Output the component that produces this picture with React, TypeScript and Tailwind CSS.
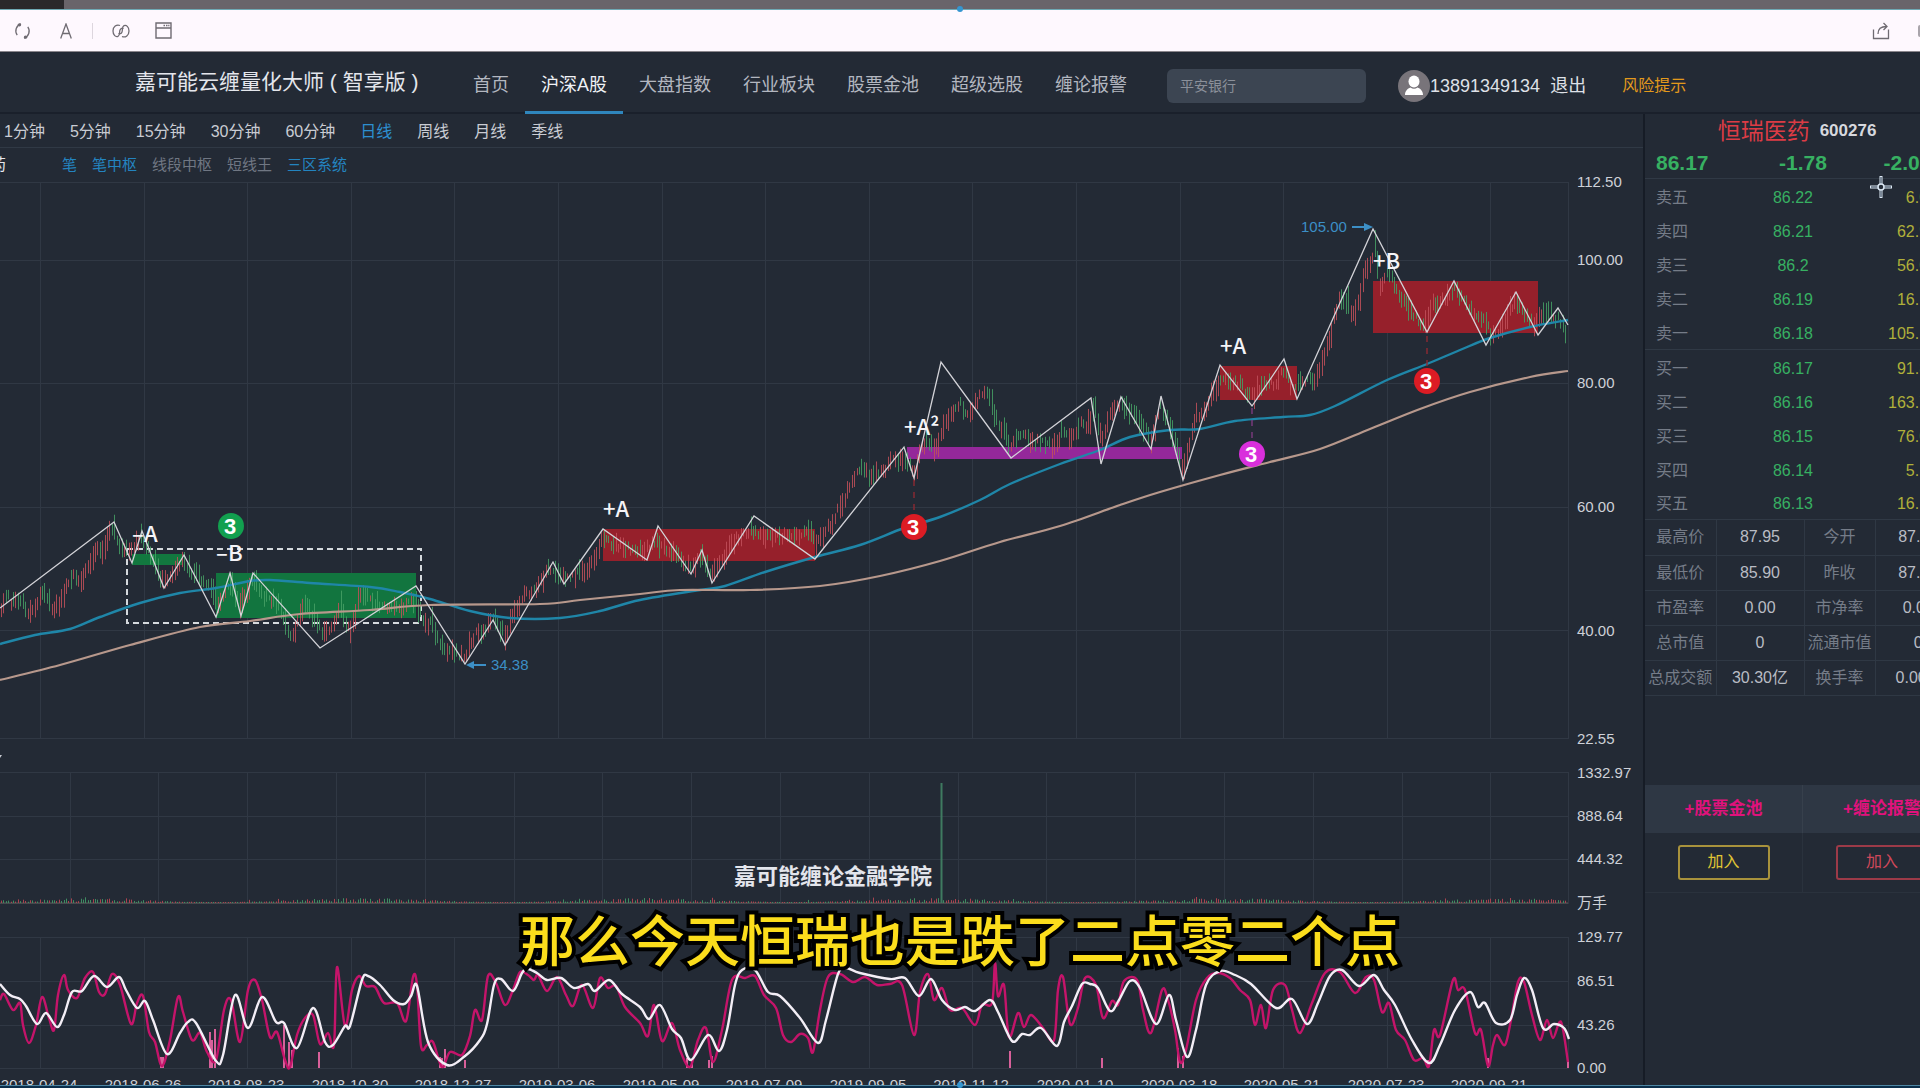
import React, { useState } from 'react';

type Point = [number, number];

const navItems = ['首页', '沪深A股', '大盘指数', '行业板块', '股票金池', '超级选股', '缠论报警'];
const periods = ['1分钟', '5分钟', '15分钟', '30分钟', '60分钟', '日线', '周线', '月线', '季线'];
const overlays = [
  { name: '笔', on: true },
  { name: '笔中枢', on: true },
  { name: '线段中枢', on: false },
  { name: '短线王', on: false },
  { name: '三区系统', on: true },
];

const asks = [
  ['卖五', '86.22', '6.00'],
  ['卖四', '86.21', '62.90'],
  ['卖三', '86.2', '56.00'],
  ['卖二', '86.19', '16.10'],
  ['卖一', '86.18', '105.10'],
];
const bids = [
  ['买一', '86.17', '91.80'],
  ['买二', '86.16', '163.70'],
  ['买三', '86.15', '76.00'],
  ['买四', '86.14', '5.10'],
  ['买五', '86.13', '16.10'],
];
const details = [
  ['最高价', '87.95', '今开', '87.50'],
  ['最低价', '85.90', '昨收', '87.95'],
  ['市盈率', '0.00', '市净率', '0.00'],
  ['总市值', '0', '流通市值', '0'],
  ['总成交额', '30.30亿', '换手率', '0.00%'],
];

const dates = [
  '2018-04-24', '2018-06-26', '2018-08-23', '2018-10-30', '2018-12-27', '2019-03-06', '2019-05-09', '2019-07-09',
  '2019-09-05', '2019-11-12', '2020-01-10', '2020-03-18', '2020-05-21', '2020-07-23', '2020-09-21',
];
const gridX = dates.map((_, i) => Math.round(40 + i * 103.6));
const volumeGridX = Array.from({ length: 17 }, (_, i) => Math.round(69.5 + i * 88.8));

const trend: Point[] = [
  [0, 612], [5, 595], [12, 602], [20, 597], [28, 612], [36, 603], [44, 592], [52, 610], [62, 600], [70, 575],
  [80, 582], [88, 568], [98, 548], [104, 555], [108, 535], [114, 530], [120, 545], [131, 552], [141, 535], [150, 555],
  [155, 565], [163, 585], [172, 575], [183, 560], [192, 572], [205, 582], [213, 590], [218, 604], [230, 580], [240, 608],
  [252, 578], [262, 595], [275, 600], [283, 615], [292, 640], [300, 615], [306, 605], [315, 620], [325, 635], [335, 625],
  [340, 605], [350, 635], [358, 600], [362, 592], [370, 600], [385, 608], [400, 607], [415, 600], [421, 615], [426, 625],
  [432, 620], [438, 640], [444, 650], [452, 652], [462, 656], [468, 650], [475, 635], [485, 628], [493, 620], [505, 635],
  [515, 610], [525, 595], [540, 585], [547, 570], [555, 568], [562, 578], [575, 575], [590, 568], [600, 545], [605, 538],
  [615, 545], [630, 550], [645, 552], [655, 540], [662, 550], [675, 550], [685, 568], [695, 565], [702, 555], [712, 575],
  [722, 560], [735, 540], [750, 528], [760, 535], [790, 536], [810, 532], [815, 545], [825, 535], [835, 515], [845, 500],
  [850, 482], [860, 470], [870, 475], [885, 468], [895, 458], [905, 460], [914, 472], [925, 440], [935, 450], [942, 430],
  [950, 412], [960, 405], [970, 415], [978, 398], [988, 392], [992, 405], [998, 425], [1005, 430], [1010, 448], [1018, 435],
  [1030, 440], [1045, 445], [1055, 445], [1062, 430], [1070, 440], [1080, 425], [1088, 425], [1095, 405], [1101, 440], [1110, 415],
  [1122, 405], [1135, 415], [1145, 430], [1152, 440], [1160, 405], [1172, 430], [1183, 470], [1190, 440], [1196, 415], [1205, 410],
  [1215, 390], [1221, 375], [1230, 380], [1240, 385], [1253, 398], [1262, 382], [1275, 385], [1284, 369], [1290, 388], [1300, 385],
  [1315, 378], [1322, 360], [1330, 340], [1338, 298], [1348, 303], [1352, 318], [1358, 305], [1364, 275], [1371, 262], [1374, 240],
  [1380, 285], [1388, 268], [1395, 285], [1402, 300], [1412, 315], [1420, 322], [1427, 325], [1433, 302], [1440, 305], [1450, 292],
  [1455, 290], [1465, 300], [1475, 315], [1485, 320], [1490, 335], [1500, 330], [1512, 305], [1518, 302], [1525, 315], [1535, 325],
  [1543, 310], [1555, 318], [1562, 322], [1568, 343],
];

const penLine: Point[] = [
  [0, 608], [114, 522], [132, 563], [142, 531], [164, 588], [184, 555], [216, 617], [230, 573], [241, 616], [253, 573],
  [320, 648], [416, 586], [465, 664], [493, 620], [505, 645], [553, 562], [564, 584], [603, 529], [647, 560], [658, 526],
  [691, 574], [702, 550], [712, 583], [754, 516], [815, 559], [904, 447], [914, 478], [941, 362], [1011, 458], [1091, 398],
  [1101, 464], [1121, 397], [1151, 449], [1161, 396], [1183, 480], [1220, 365], [1252, 406], [1284, 359], [1297, 399],
  [1373, 229], [1427, 332], [1454, 281], [1486, 345], [1516, 292], [1538, 335], [1558, 308], [1568, 325],
];

const fastAverage: Point[] = [
  [0, 644], [35, 635], [70, 629], [100, 617], [140, 603], [180, 593], [216, 588], [250, 581], [270, 580], [310, 583],
  [370, 587], [400, 592], [430, 599], [470, 611], [510, 618], [560, 618], [600, 611], [640, 600], [700, 590], [725, 586],
  [765, 572], [815, 557], [860, 545], [904, 528], [940, 517], [980, 500], [1010, 484], [1060, 464], [1100, 450], [1130, 437],
  [1170, 430], [1200, 429], [1235, 421], [1283, 417], [1310, 415], [1335, 406], [1387, 380], [1427, 364], [1460, 350],
  [1490, 338], [1530, 327], [1568, 320],
];

const slowAverage: Point[] = [
  [0, 680], [60, 665], [130, 645], [200, 627], [250, 621], [300, 614], [370, 610], [430, 605], [540, 604], [580, 600],
  [640, 594], [680, 590], [750, 590], [820, 586], [880, 576], [940, 561], [1000, 542], [1060, 526], [1120, 505], [1160, 492],
  [1220, 475], [1270, 462], [1320, 449], [1370, 429], [1420, 409], [1470, 392], [1530, 377], [1568, 371],
];

const slowStoch: Point[] = [
  [0, 984], [10, 995], [20, 999], [26, 1006], [37, 1024], [46, 1013], [57, 1027], [64, 1015], [72, 992], [82, 991],
  [94, 976], [107, 987], [119, 977], [126, 990], [137, 1008], [145, 1001], [153, 1020], [167, 1054], [180, 1033], [188, 1022],
  [196, 1023], [216, 1061], [223, 1055], [235, 995], [248, 1028], [262, 997], [276, 1022], [284, 1023], [297, 1048], [313, 1008],
  [325, 1042], [333, 1045], [345, 1026], [350, 1026], [362, 980], [368, 976], [380, 985], [393, 1000], [404, 1004], [411, 996],
  [417, 986], [428, 1042], [447, 1065], [465, 1056], [480, 1040], [487, 1024], [494, 985], [501, 979], [513, 991], [522, 973],
  [528, 969], [537, 973], [547, 980], [561, 978], [574, 988], [588, 984], [595, 991], [609, 980], [622, 994], [640, 1007],
  [649, 1019], [660, 1005], [672, 1029], [681, 1038], [691, 1060], [708, 1035], [719, 1051], [727, 1030], [735, 985], [742, 970],
  [755, 970], [768, 992], [780, 996], [800, 1018], [818, 1043], [826, 1020], [838, 974], [846, 968], [860, 973], [890, 979],
  [905, 978], [919, 996], [931, 979], [942, 1000], [955, 1010], [965, 1007], [975, 1011], [990, 1000], [998, 1012], [1012, 1041],
  [1022, 1034], [1030, 1035], [1041, 1028], [1057, 1046], [1064, 1022], [1072, 1006], [1082, 984], [1090, 984], [1098, 988],
  [1110, 1011], [1119, 1000], [1130, 981], [1140, 988], [1156, 1024], [1169, 995], [1176, 1020], [1187, 1057], [1196, 1030],
  [1206, 985], [1220, 971], [1235, 975], [1251, 984], [1276, 1008], [1292, 999], [1307, 1024], [1318, 1003], [1330, 976],
  [1342, 970], [1359, 986], [1374, 975], [1384, 990], [1395, 1005], [1412, 1040], [1429, 1063], [1440, 1045], [1455, 1010],
  [1470, 992], [1478, 1007], [1485, 1003], [1496, 1023], [1510, 1020], [1517, 995], [1524, 978], [1532, 990], [1543, 1028],
  [1554, 1024], [1564, 1028], [1569, 1039],
];

const fastStoch: Point[] = [
  [0, 1000], [4, 994], [13, 1010], [20, 1003], [23, 1025], [29, 1043], [36, 1025], [42, 997], [49, 1018], [54, 1030],
  [58, 995], [64, 975], [68, 990], [77, 998], [85, 978], [93, 972], [99, 992], [105, 994], [112, 974], [120, 985],
  [131, 1024], [137, 1003], [143, 996], [149, 1032], [155, 1042], [162, 1066], [170, 1040], [178, 997], [183, 1012], [192, 1040],
  [200, 1033], [207, 1052], [216, 1060], [224, 1010], [231, 1000], [240, 1042], [248, 990], [255, 980], [262, 1000], [270, 1037],
  [277, 1032], [285, 1060], [290, 1067], [297, 1035], [305, 1018], [313, 1015], [320, 1044], [328, 1033], [334, 1045], [337, 967],
  [345, 1026], [352, 990], [359, 976], [366, 986], [375, 987], [384, 1003], [397, 1003], [406, 1021], [413, 977], [417, 985],
  [421, 1046], [427, 1045], [433, 1042], [442, 1067], [450, 1052], [462, 1055], [470, 1036], [475, 1010], [482, 1020], [488, 976],
  [496, 983], [505, 1005], [513, 990], [520, 972], [528, 975], [534, 980], [538, 975], [547, 991], [557, 977], [566, 995],
  [573, 1006], [582, 985], [593, 1008], [600, 978], [608, 988], [616, 986], [625, 1007], [640, 1023], [648, 1036], [654, 1005],
  [662, 1041], [672, 1023], [680, 1050], [690, 1067], [698, 1040], [706, 1028], [713, 1062], [722, 1030], [732, 980], [745, 978],
  [755, 976], [764, 995], [776, 1008], [783, 1035], [791, 1042], [800, 1034], [808, 1038], [813, 1052], [820, 1010], [828, 977],
  [840, 974], [853, 982], [865, 977], [877, 985], [890, 984], [902, 985], [914, 1035], [920, 992], [928, 974], [934, 1000],
  [942, 988], [950, 1010], [962, 1008], [975, 1025], [982, 1005], [992, 1003], [995, 963], [998, 996], [1004, 985], [1009, 1037],
  [1018, 1013], [1024, 1027], [1031, 1015], [1043, 1028], [1054, 1040], [1058, 990], [1063, 977], [1070, 1024], [1078, 1008], [1085, 978],
  [1096, 985], [1103, 1018], [1112, 1001], [1118, 1005], [1124, 981], [1137, 980], [1143, 1010], [1151, 1033], [1162, 990], [1168, 1000],
  [1175, 1030], [1180, 1062], [1186, 1050], [1196, 1000], [1207, 978], [1218, 973], [1230, 978], [1240, 990], [1250, 1000], [1255, 1025],
  [1261, 1005], [1266, 1028], [1273, 990], [1285, 985], [1292, 1010], [1300, 1033], [1312, 1003], [1325, 973], [1340, 972], [1355, 993],
  [1366, 977], [1374, 980], [1382, 1012], [1389, 1003], [1396, 1030], [1405, 1040], [1414, 1060], [1423, 1058], [1429, 1066], [1434, 1030],
  [1440, 1035], [1453, 980], [1458, 990], [1465, 990], [1475, 1033], [1481, 1030], [1488, 1066], [1493, 1045], [1497, 1035], [1505, 1045],
  [1511, 1020], [1518, 982], [1524, 982], [1532, 1015], [1540, 1040], [1547, 1020], [1553, 1038], [1561, 1022], [1568, 1062],
];

const signals: Point[] = [
  [161, 1057], [163, 1057], [210, 1032], [212, 1040], [215, 1029], [284, 1025], [289, 1042], [292, 1050], [319, 1052], [440, 1057],
  [442, 1058], [445, 1049], [465, 1060], [687, 1058], [692, 1060], [709, 1060], [712, 1056], [1010, 1051], [1102, 1058], [1178, 1048],
  [1183, 1056], [1428, 1060], [1488, 1058], [1568, 1060],
];

// Repeatable pseudo random value between 0 and 1
const noise = (n: number) => {
  const v = Math.sin(n * 127.1 + 11.7) * 43758.5453;
  return v - Math.floor(v);
};

const valueAt = (points: Point[], x: number) => {
  const i = Math.max(1, points.findIndex(p => p[0] >= x));
  const [x0, y0] = points[i - 1];
  const [x1, y1] = points[i];
  return y0 + ((y1 - y0) * (x - x0)) / (x1 - x0);
};

const toPoints = (points: Point[]) => points.map(p => p.join(',')).join(' ');

const toCurve = (points: Point[]) =>
  points.reduce((path, p, i) => {
    if (i === 0) return `M${p[0]} ${p[1]}`;
    const a = points[i - 1];
    const before = points[i - 2] || a;
    const after = points[i + 1] || p;
    const c1 = [a[0] + (p[0] - before[0]) / 6, a[1] + (p[1] - before[1]) / 6];
    const c2 = [p[0] - (after[0] - a[0]) / 6, p[1] - (after[1] - a[1]) / 6];
    return `${path}C${c1[0].toFixed(1)} ${c1[1].toFixed(1)} ${c2[0].toFixed(1)} ${c2[1].toFixed(1)} ${p[0]} ${p[1]}`;
  }, '');

const candles = Array.from({ length: 650 }, (_, i) => {
  const x = Math.round(1 + i * 2.41);
  const y = valueAt(trend, Math.min(x, 1567));
  const slope = valueAt(trend, Math.min(x + 4, 1567)) - y;
  const mid = y + (noise(i) - 0.5) * 8;
  const half = 2 + noise(i + 900) * 8 + Math.min(Math.abs(slope) / 3, 4);
  const rising = slope + (noise(i + 400) - 0.5) * 9 < 0;
  return { x: x + 0.5, top: mid - half, bottom: mid + half, rising };
});

const volumes = Array.from({ length: 650 }, (_, i) => ({
  x: Math.round(1 + i * 2.41) + 0.5,
  height: 1 + noise(i + 50) * 2 * (1 + Math.sin(i / 19)) + (noise(i + 77) > 0.96 ? 2 : 0),
  rising: noise(i + 300) > 0.5,
}));

const AxisLabel: React.FC<{ y: number; children: string }> = ({ y, children }) => (
  <text x={1577} y={y + 5} fontSize={15} fill="#ced1d8">{children}</text>
);

const Badge: React.FC<{ x: number; y: number; color: string }> = ({ x, y, color }) => (
  <g>
    <circle cx={x} cy={y} r={13} fill={color} />
    <text x={x - 1} y={y + 8} fontSize={22} fontWeight={700} fill="#fff" textAnchor="middle">3</text>
  </g>
);

const Mark: React.FC<{ x: number; y: number; children: React.ReactNode }> = ({ x, y, children }) => (
  <text x={x} y={y + 8} fontSize={22} fontWeight={500} fill="#f4f4f8" fontFamily="'Noto Sans CJK SC', sans-serif">
    {children}
  </text>
);

const PriceChart: React.FC = () => (
  <svg viewBox="0 182 1643 573" className="block w-full overflow-visible">
    <g stroke="#303844" strokeWidth={1}>
      {[182, 260, 383, 507, 630, 738].map(y => <line key={y} x1={0} x2={1569} y1={y + 0.5} y2={y + 0.5} />)}
      {[...gridX, 1568].map(x => <line key={x} x1={x + 0.5} x2={x + 0.5} y1={182} y2={738} />)}
    </g>

    {/* Pivot zones */}
    <rect x={132} y={554} width={51} height={11} fill="#12783f" />
    <rect x={216} y={573} width={200} height={45} fill="#12753f" />
    <rect x={603} y={529} width={212} height={32} fill="#96202b" />
    <rect x={907} y={447} width={275} height={12} fill="#94289a" />
    <rect x={1220} y={366} width={77} height={34} fill="#96202b" />
    <rect x={1373} y={281} width={165} height={52} fill="#96202b" />
    <rect x={127} y={549} width={294} height={74} fill="none" stroke="#d5d9dd" strokeWidth={2} strokeDasharray="6 4" />

    <g strokeWidth={1} opacity={0.85}>
      {candles.map(c => (
        <line key={c.x} x1={c.x} x2={c.x} y1={c.top} y2={c.bottom} stroke={c.rising ? '#c2505a' : '#46a065'} />
      ))}
    </g>

    <path d={toCurve(fastAverage)} fill="none" stroke="#1f86a8" strokeWidth={2.4} />
    <path d={toCurve(slowAverage)} fill="none" stroke="#b7988c" strokeWidth={2.2} />
    <polyline points={toPoints(penLine)} fill="none" stroke="#d3d3d8" strokeWidth={1.3} />

    <g stroke="#8d2a33" strokeWidth={1.4} strokeDasharray="6 6">
      <line x1={914} x2={914} y1={480} y2={514} />
      <line x1={1427} x2={1427} y1={336} y2={368} />
      <line x1={1252} x2={1252} y1={408} y2={440} stroke="#7d3b80" />
    </g>
    <Badge x={231} y={526} color="#12a04f" />
    <Badge x={914} y={527} color="#dc1c24" />
    <Badge x={1252} y={454} color="#d92fdc" />
    <Badge x={1427} y={381} color="#dc1c24" />

    <Mark x={132} y={534}>–A</Mark>
    <Mark x={216} y={553}>–B</Mark>
    <Mark x={603} y={509}>+A</Mark>
    <Mark x={904} y={427}>+A²</Mark>
    <Mark x={1220} y={346}>+A</Mark>
    <Mark x={1373} y={261}>+B</Mark>

    <g fill="#3c8fc6" stroke="none" fontSize={15}>
      <text x={1301} y={232}>105.00</text>
      <path d="M1352 226h12v-3l9 4-9 4v-3h-12z" />
      <text x={491} y={670}>34.38</text>
      <path d="M486 664h-12v-3l-8 4 8 4v-3h12z" />
    </g>

    <AxisLabel y={182}>112.50</AxisLabel>
    <AxisLabel y={260}>100.00</AxisLabel>
    <AxisLabel y={383}>80.00</AxisLabel>
    <AxisLabel y={507}>60.00</AxisLabel>
    <AxisLabel y={631}>40.00</AxisLabel>
    <AxisLabel y={739}>22.55</AxisLabel>
  </svg>
);

const VolumeChart: React.FC = () => (
  <svg viewBox="0 755 1643 165" className="block w-full overflow-visible">
    <g stroke="#303844" strokeWidth={1}>
      {[772, 816, 859, 903].map(y => <line key={y} x1={0} x2={1569} y1={y + 0.5} y2={y + 0.5} />)}
      {[...volumeGridX, 1568].map(x => <line key={x} x1={x + 0.5} x2={x + 0.5} y1={772} y2={903} />)}
    </g>
    <path d="M0 755h2l-2 3z" fill="#c6c9d0" />
    <line x1={0} x2={1568} y1={903} y2={903} stroke="#5c5a58" />
    {volumes.map(v => (
      <line key={v.x} x1={v.x} x2={v.x} y1={903 - v.height} y2={903} stroke={v.rising ? '#a84450' : '#3f8c62'} />
    ))}
    <line x1={941.5} x2={941.5} y1={783} y2={903} stroke="#3f7a60" strokeWidth={2} />
    <text x={734} y={884} fontSize={22} fontWeight={700} fill="#e3e5ec" fontFamily="'Noto Sans CJK SC', sans-serif">
      嘉可能缠论金融学院
    </text>
    <AxisLabel y={773}>1332.97</AxisLabel>
    <AxisLabel y={816}>888.64</AxisLabel>
    <AxisLabel y={859}>444.32</AxisLabel>
    <AxisLabel y={903}>万手</AxisLabel>
  </svg>
);

const StochChart: React.FC = () => (
  <svg viewBox="0 920 1643 165" className="block w-full overflow-visible">
    <g stroke="#303844" strokeWidth={1}>
      {[937, 981, 1025, 1068].map(y => <line key={y} x1={0} x2={1569} y1={y + 0.5} y2={y + 0.5} />)}
      {[...gridX, 1568].map(x => <line key={x} x1={x + 0.5} x2={x + 0.5} y1={937} y2={1068} />)}
    </g>
    {signals.map(([x, y]) => <line key={x} x1={x} x2={x} y1={y} y2={1068} stroke="#d8609a" strokeWidth={2} />)}
    <path d={toCurve(fastStoch)} fill="none" stroke="#c4146a" strokeWidth={2.4} />
    <path d={toCurve(slowStoch)} fill="none" stroke="#f3eef6" strokeWidth={2.4} />
    {dates.map((d, i) => (
      <text key={d} x={gridX[i] - 1} y={1090} fontSize={15} fill="#ced1d8" textAnchor="middle">{d}</text>
    ))}
    <AxisLabel y={937}>129.77</AxisLabel>
    <AxisLabel y={981}>86.51</AxisLabel>
    <AxisLabel y={1025}>43.26</AxisLabel>
    <AxisLabel y={1068}>0.00</AxisLabel>
  </svg>
);

const OrderTable: React.FC<{ rows: string[][] }> = ({ rows }) => (
  <table className="w-full table-fixed border-b border-[#303945]">
    <colgroup>
      <col className="w-[95px]" />
      <col className="w-[106px]" />
      <col />
    </colgroup>
    <tbody>
      {rows.map(([label, price, amount]) => (
        <tr key={label} className="h-[34px]">
          <th scope="row" className="pt-1 pl-[11px] text-left font-normal text-[#757c88]">{label}</th>
          <td className="pt-1 text-center text-[#37b062]">{price}</td>
          <td className="pt-1 pr-6 text-right text-[#b0b03a]">{amount}</td>
        </tr>
      ))}
    </tbody>
  </table>
);

const QuotePanel: React.FC = () => (
  <aside className="w-[277px] shrink-0 overflow-hidden border-l-2 border-[#161c26] text-[16px] leading-6">
    <div className="w-[316px]">
      <h2 className="flex h-[33px] items-center justify-center gap-[10px] pr-3">
        <span className="text-[23px] text-[#dc3c45]">恒瑞医药</span>
        <span className="text-[17px] font-bold text-[#d6d8de]">600276</span>
      </h2>
      <div className="grid h-8 grid-cols-3 items-center border-b border-[#303945] px-[11px] text-[21px] font-bold text-[#37b062]">
        <span>86.17</span>
        <span className="text-center">-1.78</span>
        <span className="text-right">-2.02%</span>
      </div>
      <OrderTable rows={asks} />
      <OrderTable rows={bids} />
      <table className="w-full table-fixed text-center">
        <colgroup>
          <col className="w-[71px]" />
          <col className="w-[88px]" />
          <col className="w-[71px]" />
          <col />
        </colgroup>
        <tbody>
          {details.map(([k1, v1, k2, v2]) => (
            <tr key={k1} className="h-[35px] border-b border-[#2f3844] whitespace-nowrap">
              <th scope="row" className="border-r border-[#2f3844] font-normal text-[#757c88]">{k1}</th>
              <td className="border-r border-[#2f3844] text-[#b9bcc4]">{v1}</td>
              <th scope="row" className="border-r border-[#2f3844] font-normal text-[#757c88]">{k2}</th>
              <td className="text-[#b9bcc4]">{v2}</td>
            </tr>
          ))}
        </tbody>
      </table>
      <div className="mt-[89px] grid grid-cols-2 text-center">
        <div className="border-r border-[#37404c] bg-[#2e3744] py-3 text-[17px] font-bold text-[#e0127c]">+股票金池</div>
        <div className="bg-[#2e3744] py-3 text-[17px] font-bold text-[#e0127c]">+缠论报警</div>
        <div className="border-r border-b border-[#2a323d] py-3">
          <button className="h-[35px] w-[92px] rounded-[3px] border-2 border-[#a8923c] text-[#e0c534]">加入</button>
        </div>
        <div className="border-b border-[#2a323d] py-3">
          <button className="h-[35px] w-[92px] rounded-[3px] border-2 border-[#9c3a48] text-[#d0485a]">加入</button>
        </div>
      </div>
    </div>
  </aside>
);

const Toolbar: React.FC = () => (
  <div className="flex h-[42px] items-center border-b border-[#8a868c] bg-[#fef8fe] pl-[13px] text-[#6f6b72]">
    <button aria-label="刷新" className="mr-7">
      <svg width="19" height="20" viewBox="0 0 19 20" fill="none" stroke="currentColor" strokeWidth="1.3">
        <path d="M8 3A7 7.200 0 0 0 4.200 14.200M4.500 4.200h2.500M11 17A7 7.200 0 0 0 14.800 5.800M14.500 15.800h-2.500" />
        <circle cx="6.500" cy="3.800" r="1" fill="currentColor" />
        <circle cx="12.500" cy="16.200" r="1" fill="currentColor" />
      </svg>
    </button>
    <button aria-label="字体">
      <svg width="12" height="16" viewBox="0 0 12 16" fill="none" stroke="currentColor" strokeWidth="1.3">
        <path d="M.7 15.500 6 1l5.300 14.500M2.600 10.500h6.800" />
      </svg>
    </button>
    <span className="mr-[19px] ml-5 h-4 w-px bg-[#ddd6de]" />
    <button aria-label="链接" className="mr-[25px]">
      <svg width="18" height="16" viewBox="0 0 18 16" fill="none" stroke="currentColor" strokeWidth="1.3">
        <path d="M8 2.500C4.500 1 1 3.800 1 8s2.800 6.300 5 5.300C8.200 12.300 7.200 9 8 7s2.500-2.200 3.300-1.200" />
        <path d="M8 2.500C4.500 1 1 3.800 1 8s2.800 6.300 5 5.300C8.200 12.300 7.200 9 8 7s2.500-2.200 3.300-1.200" transform="rotate(180 9 8)" />
      </svg>
    </button>
    <button aria-label="窗口">
      <svg width="17" height="17" viewBox="0 0 17 17" fill="none" stroke="currentColor" strokeWidth="1.4">
        <path d="M1 1h15v15H1zM1 6h15M8.500 3.500h1.500M11 3.500h1.500M13.200 3.500h1.200" />
      </svg>
    </button>
    <button aria-label="分享" className="mr-7 ml-auto">
      <svg width="18" height="18" viewBox="0 0 18 18" fill="none" stroke="currentColor" strokeWidth="1.3">
        <path d="M1.500 7.500v9h15v-9M6 12c0-5 3-7.500 8.500-7.500M11.500 1l3.500 3.500L11.500 8" />
      </svg>
    </button>
    <span className="h-3 w-[2px] rounded-l bg-[#a9a4ab]" />
  </div>
);

const Header: React.FC = () => {
  const [active, setActive] = useState('沪深A股');

  return (
    <header className="flex h-[62px] items-center border-b-2 border-[#1a202b] pl-[135px] whitespace-nowrap">
      <h1 className="w-[322px] shrink-0 text-[21px] text-[#e4e6ec]">嘉可能云缠量化大师&nbsp;(&nbsp;智享版&nbsp;)</h1>
      <nav className="flex h-[62px] self-start text-[18px]">
        {navItems.map(item => (
          <a
            key={item}
            href="#"
            onClick={() => setActive(item)}
            className={`flex items-center border-b-3 px-4 pt-2 ${
              item === active ? 'border-[#2f86bd] text-[#f0f2f6]' : 'border-transparent text-[#b3b7c0]'
            }`}
          >
            {item}
          </a>
        ))}
      </nav>
      <div className="flex items-center pt-2">
        <input
          aria-label="搜索股票"
          placeholder="平安银行"
          className="ml-6 h-[34px] w-[199px] rounded-md bg-[#3c4552] px-[13px] text-[14px] text-white outline-none placeholder:text-[#8b909a]"
        />
        <svg className="ml-8 shrink-0" width="32" height="32" viewBox="0 0 32 32">
          <circle cx="16" cy="16" r="16" fill="#78747a" />
          <ellipse cx="16" cy="11.500" rx="5.500" ry="6" fill="#fff" />
          <path d="M7 25c0-4 2.500-6.500 5.500-7.500 2 1.700 5 1.700 7 0 3 1 5.500 3.500 5.500 7.500z" fill="#fff" />
        </svg>
        <span className="text-[18px] text-[#dfe1e7]">13891349134</span>
        <a href="#" className="ml-[10px] text-[18px] text-[#dfe1e7]">退出</a>
        <a href="#" className="ml-9 text-[16px] text-[#e39a1c]">风险提示</a>
      </div>
    </header>
  );
};

const App: React.FC = () => {
  const [period, setPeriod] = useState('日线');

  return (
    <div className="relative flex h-screen flex-col overflow-hidden bg-[#232a35] font-['Liberation_Sans','Noto_Sans_CJK_SC',sans-serif]">
      <div className="flex h-[10px] shrink-0 border-b border-[#6fa9b4] bg-[#69646a]">
        <div className="w-16 bg-[#2a282b]" />
      </div>
      <Toolbar />
      <Header />

      <div className="flex min-h-0 flex-1 overflow-hidden">
        <main className="min-w-0 flex-1">
          <div className="flex h-[34px] items-center gap-[25px] border-b border-[#303945] pt-[2px] pl-1 text-[16px]">
            {periods.map(item => (
              <button
                key={item}
                onClick={() => setPeriod(item)}
                className={item === period ? 'text-[#2d8fd0]' : 'text-[#c9ccd3]'}
              >
                {item}
              </button>
            ))}
          </div>
          <div className="flex h-[34px] items-center gap-[15px] text-[15px]">
            <span className="-ml-[58px] w-[105px] text-[16px] text-[#e4e6ec]">恒瑞医药</span>
            {overlays.map(({ name, on }) => (
              <button key={name} className={on ? 'text-[#2384c0]' : 'text-[#707783]'}>{name}</button>
            ))}
          </div>
          <PriceChart />
          <VolumeChart />
          <StochChart />
        </main>
        <QuotePanel />
      </div>

      <div className="z-10 h-[3px] shrink-0 border-t border-[#4f87a3] bg-[#0b2f4c]" />

      {/* Caption over the charts */}
      <p className="absolute inset-x-0 bottom-[106px] text-center text-[55px] leading-[80px] font-medium text-[#fbdd1c] [-webkit-text-stroke:8px_#000] [paint-order:stroke_fill]">
        那么今天恒瑞也是跌了二点零二个点
      </p>

      {/* Frame handles */}
      <span className="absolute top-[6px] left-1/2 h-[6px] w-[6px] -translate-x-1/2 rounded-full bg-[#3596d0]" />
      <span className="absolute bottom-0 left-1/2 z-20 h-[6px] w-[6px] -translate-x-1/2 rounded-full bg-[#3596d0]" />

      {/* Crosshair pointer */}
      <svg className="absolute top-[176px] right-[28px]" width="22" height="22" viewBox="0 0 22 22">
        <path d="M11 0v8M11 14v8M0 11h8M14 11h8" stroke="#dce8f4" strokeWidth="3" />
        <path d="M11 1v7M11 14v7M1 11h7M14 11h7" stroke="#1c2a3c" strokeWidth="1" />
        <circle cx="11" cy="11" r="3" fill="none" stroke="#dce8f4" strokeWidth="1.500" />
      </svg>
    </div>
  );
};

export default App;
